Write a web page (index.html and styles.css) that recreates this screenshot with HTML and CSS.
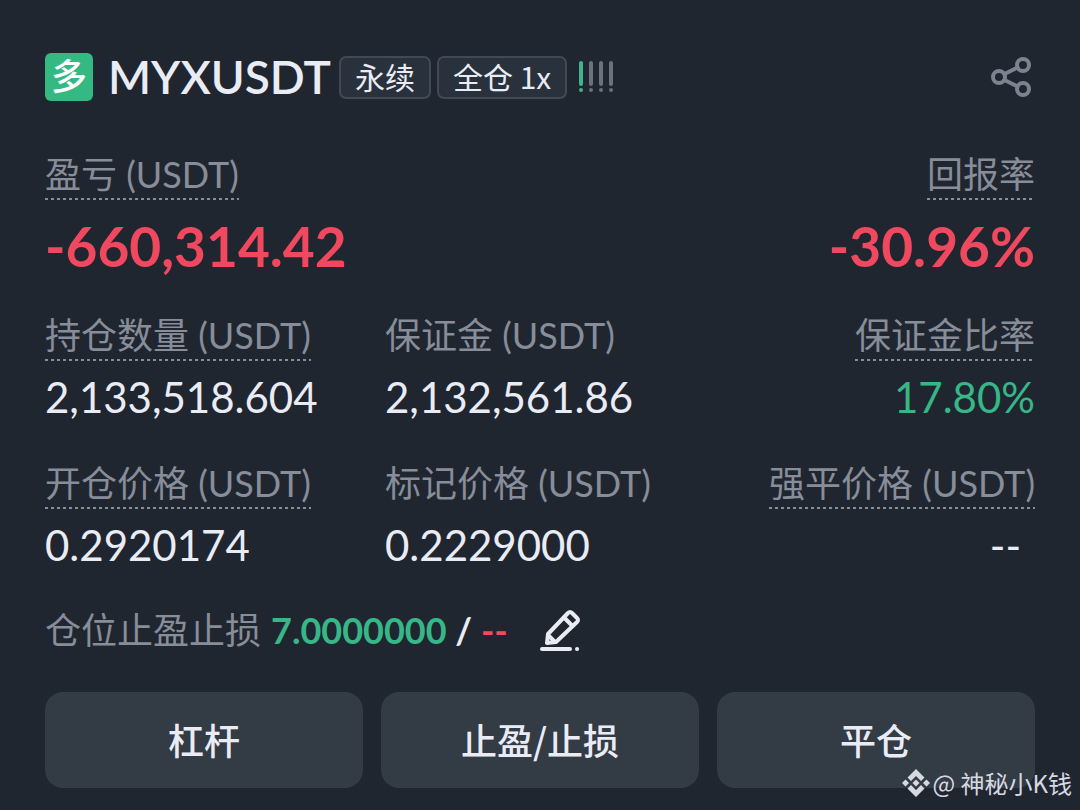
FILE: index.html
```html
<!DOCTYPE html>
<html lang="zh-CN">
<head>
    <meta charset="UTF-8">
    <meta name="viewport" content="width=device-width, initial-scale=1">
    <title>MYXUSDT 永续</title>
    <link rel="stylesheet" href="styles.css">
</head>
<body>
    <main class="position">
        <!-- Header -->
        <header class="header">
            <span class="side">多</span>
            <h1 class="symbol">MYXUSDT</h1>
            <span class="tag">永续</span>
            <span class="tag">全仓 1x</span>
            <svg class="risk" viewBox="0 0 36 32" aria-hidden="true">
                <g class="risk-on"><path d="M2 2V23"/><path d="M2 29V29.1"/></g>
                <path d="M12 2V23M22 2V23M32 2V23M12 29V29.1M22 29V29.1M32 29V29.1"/>
            </svg>
            <button class="icon-button share" type="button" aria-label="分享">
                <svg viewBox="0 0 42 42" width="42" height="42">
                    <circle cx="9" cy="21" r="6"/>
                    <circle cx="33" cy="9" r="6"/>
                    <circle cx="33" cy="33" r="6"/>
                    <path d="M14.5 18L27.5 11.5M14.5 24L27.5 30.5"/>
                </svg>
            </button>
        </header>

        <!-- PnL -->
        <dl class="summary">
            <div class="stat">
                <dt><span class="hint">盈亏 (USDT)</span></dt>
                <dd class="loss">-660,314.42</dd>
            </div>
            <div class="stat right">
                <dt><span class="hint">回报率</span></dt>
                <dd class="loss">-30.96%</dd>
            </div>
        </dl>

        <!-- Details -->
        <dl class="details">
            <div class="stat">
                <dt><span class="hint">持仓数量 (USDT)</span></dt>
                <dd>2,133,518.604</dd>
            </div>
            <div class="stat">
                <dt>保证金 (USDT)</dt>
                <dd>2,132,561.86</dd>
            </div>
            <div class="stat right">
                <dt><span class="hint">保证金比率</span></dt>
                <dd class="gain">17.80%</dd>
            </div>
            <div class="stat">
                <dt><span class="hint">开仓价格 (USDT)</span></dt>
                <dd>0.2920174</dd>
            </div>
            <div class="stat">
                <dt>标记价格 (USDT)</dt>
                <dd>0.2229000</dd>
            </div>
            <div class="stat right">
                <dt><span class="hint">强平价格 (USDT)</span></dt>
                <dd class="empty">--</dd>
            </div>
        </dl>

        <!-- TP / SL -->
        <div class="tpsl">
            <span class="tpsl-label">仓位止盈止损</span>
            <span class="tpsl-value"><span class="gain">7.0000000</span> / <span class="loss">--</span></span>
            <button class="icon-button edit" type="button" aria-label="编辑">
                <svg viewBox="0 0 40 42" width="40" height="42">
                    <path d="M7 34L8 25L28 4Q30 2 32 4L37 9Q39 11 37 13L16 33Z"/>
                    <path d="M24 8.500L32.500 17M8 26L15 33"/>
                    <path d="M2 40H30M37 40H37.100"/>
                </svg>
            </button>
        </div>

        <div class="actions">
            <button type="button">杠杆</button>
            <button type="button">止盈/止损</button>
            <button type="button">平仓</button>
        </div>
    </main>

    <div class="watermark">
        <svg viewBox="0 0 28 28" width="28" height="28" aria-hidden="true">
            <path d="M14 0L22.500 8.500L19 12L14 7L9 12L5.500 8.500Z"/>
            <path d="M14 28L22.500 19.500L19 16L14 21L9 16L5.500 19.500Z"/>
            <path d="M14 10.500L17.500 14L14 17.500L10.500 14Z"/>
            <path d="M3.500 10.500L7 14L3.500 17.500L0 14Z"/>
            <path d="M24.500 10.500L28 14L24.500 17.500L21 14Z"/>
        </svg>
        <span>@ 神秘小K钱</span>
    </div>
</body>
</html>
```
FILE: styles.css
```css
* {
    box-sizing: border-box;
}

body {
    margin: 0;
    min-height: 100vh;
    position: relative;
    background-color: #202630;
    color: #eaecf5;
    font-family: Lato, "Noto Sans CJK SC", sans-serif;
}

.position {
    padding: 48px 45px 22px;
}

.header {
    display: flex;
    align-items: center;
    height: 58px;
}

.side {
    width: 48px;
    height: 48px;
    border-radius: 6px;
    background-color: #35b983;
    color: #fff;
    font-size: 36px;
    line-height: 46px;
    font-weight: 500;
    text-align: center;
}

.symbol {
    margin: 0 8px 0 15px;
    font-size: 46px;
    line-height: 60px;
    font-weight: 600;
}

.tag {
    height: 43px;
    margin-right: 6px;
    padding: 0 14px;
    border: 2px solid #414955;
    border-radius: 7px;
    background-color: #29313c;
    font-family: "Noto Sans CJK SC", sans-serif;
    font-size: 30px;
    line-height: 36px;
    white-space: nowrap;
}

.risk {
    width: 36px;
    height: 32px;
    margin-left: 6px;
    fill: none;
    stroke: #6b717d;
    stroke-width: 4;
    stroke-linecap: round;
}

.risk-on {
    stroke: #3fb58c;
}

.icon-button {
    display: flex;
    padding: 0;
    border: none;
    background: none;
    cursor: pointer;
}

.icon-button svg {
    fill: none;
    stroke: currentColor;
    stroke-width: 4;
    stroke-linecap: round;
    stroke-linejoin: round;
}

.share {
    margin-left: auto;
    margin-right: 3px;
    color: #7c838f;
}

dl, dd {
    margin: 0;
}

.summary {
    display: flex;
    justify-content: space-between;
    margin-top: 45px;
}

.details {
    display: grid;
    grid-template-columns: 34fr 34fr 31fr;
    row-gap: 38px;
    margin-top: 34px;
}

dt {
    height: 49px;
    color: #878d99;
    font-size: 36px;
    line-height: 46px;
    white-space: nowrap;
}

.hint {
    display: inline-block;
    height: 49px;
    background: repeating-linear-gradient(90deg, #878d99 0 3px, transparent 3px 6px) left bottom / 100% 2px no-repeat;
}

dd {
    font-size: 42px;
    line-height: 50px;
    margin-top: 11px;
}

.summary dd {
    font-size: 55px;
    line-height: 64px;
    font-weight: 700;
    margin-top: 14px;
}

.right {
    text-align: right;
}

.empty {
    padding-right: 14px;
}

.gain {
    color: #37b787;
}

.loss {
    color: #f0485f;
}

.tpsl {
    display: flex;
    align-items: center;
    height: 52px;
    margin-top: 34px;
    font-size: 36px;
    line-height: 52px;
    white-space: nowrap;
}

.tpsl-label {
    color: #878d99;
}

.tpsl-value {
    margin-left: 10px;
    font-weight: 700;
}

.edit {
    margin-left: 32px;
    color: #eaecf5;
}

.actions {
    display: grid;
    grid-template-columns: repeat(3, 1fr);
    gap: 18px;
    margin-top: 36px;
}

.actions button {
    height: 96px;
    padding: 0 0 2px;
    border: none;
    border-radius: 18px;
    background-color: #333b45;
    color: #eaecf5;
    font-family: "Noto Sans CJK SC", sans-serif;
    font-size: 36px;
    font-weight: 500;
    cursor: pointer;
}

.watermark {
    position: absolute;
    right: 8px;
    bottom: 11px;
    display: flex;
    align-items: center;
    gap: 2px;
    color: #d5d9e0;
    font-family: "Noto Sans CJK SC", sans-serif;
    font-size: 24px;
    line-height: 32px;
}

.watermark svg {
    fill: currentColor;
}
```
